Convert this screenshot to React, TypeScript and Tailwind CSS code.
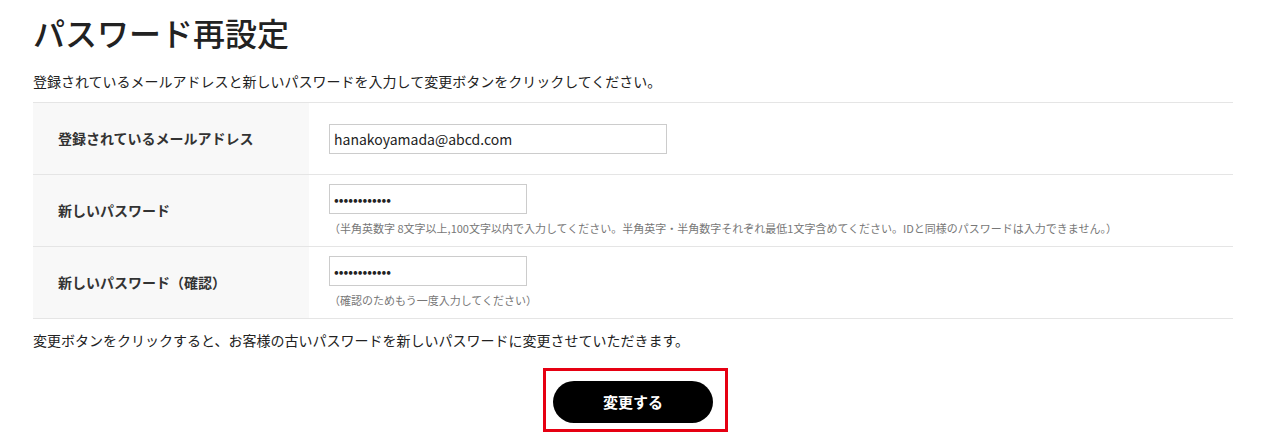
const font = { fontFamily: '"Noto Sans CJK JP", "Noto Sans", sans-serif' };

const rows = [
  { label: "登録されているメールアドレス", type: "email", value: "hanakoyamada@abcd.com", wide: true },
  {
    label: "新しいパスワード",
    type: "password",
    value: "aaaaaaaaaaaa",
    note: "（半角英数字 8文字以上,100文字以内で入力してください。半角英字・半角数字それぞれ最低1文字含めてください。IDと同様のパスワードは入力できません。）",
  },
  {
    label: "新しいパスワード（確認）",
    type: "password",
    value: "aaaaaaaaaaaa",
    note: "（確認のためもう一度入力してください）",
  },
];

export default function App() {
  return (
    <div className="bg-white min-h-[446px] text-[#222]" style={font}>
      <div className="ml-[33px] w-[1200px] pt-[9px]">
        <h1 className="text-[32px] leading-[46px] font-medium">パスワード再設定</h1>
        <p className="mt-[16px] text-[14px] leading-[21px]">
          登録されているメールアドレスと新しいパスワードを入力して変更ボタンをクリックしてください。
        </p>

        <div className="mt-[10px] border-t border-[#e5e5e5]">
          {rows.map((r) => (
            <div key={r.label} className="grid grid-cols-[276px_1fr] h-[72px] border-b border-[#e5e5e5]">
              <div className="bg-[#f8f8f8] px-[25px] flex items-center text-[14px] font-bold text-[#333]">
                {r.label}
              </div>
              <div
                className={
                  r.note
                    ? "px-[20px] pt-[9px] flex flex-col items-start"
                    : "px-[20px] flex flex-col justify-center items-start"
                }
              >
                <input
                  type={r.type}
                  defaultValue={r.value}
                  readOnly
                  className={
                    (r.wide ? "w-[338px]" : "w-[198px]") +
                    " h-[30px] border border-[#ccc] px-[4px] text-[14px] text-[#222] outline-none"
                  }
                  style={font}
                />
                {r.note && (
                  <p className="mt-[6px] text-[11px] leading-[16px] text-[#777]">{r.note}</p>
                )}
              </div>
            </div>
          ))}
        </div>

        <p className="mt-[11px] text-[14px] leading-[21px]">
          変更ボタンをクリックすると、お客様の古いパスワードを新しいパスワードに変更させていただきます。
        </p>

        <div className="mt-[17px] flex">
          <div className="ml-[510px] border-[3px] border-[#e60012] pl-[7px] pr-[12px] pt-[10px] pb-[6px]">
            <button
              type="button"
              className="w-[160px] h-[42px] rounded-full bg-black text-white text-[15px] font-bold"
              style={font}
            >
              変更する
            </button>
          </div>
        </div>
      </div>
    </div>
  );
}
